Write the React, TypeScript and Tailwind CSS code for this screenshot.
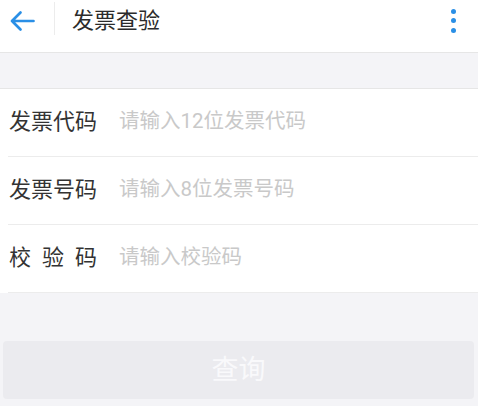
import { useState } from "react";

const FONT = { fontFamily: 'Roboto, "Noto Sans CJK SC", "Noto Sans", sans-serif' };

export default function App() {
  const [code, setCode] = useState("");
  const [number, setNumber] = useState("");
  const [check, setCheck] = useState("");
  const ready = code && number && check;

  return (
    <div className="min-h-[406px] w-[478px] bg-[#f4f4f7]" style={FONT}>
      <header className="relative flex h-[53px] items-center border-b border-[#e6e6e6] bg-white pb-[11px]">
        <button className="flex w-[44px] items-center justify-center">
          <svg width="27" height="22" viewBox="0 0 27 22" fill="none">
            <path d="M24.5 11H3M11.5 2.5 3 11l8.5 8.5" stroke="#2a8fe6" strokeWidth="2.7" strokeLinecap="round" strokeLinejoin="round" />
          </svg>
        </button>
        <div className="ml-[10px] mt-[2px] h-[33px] w-px self-start bg-[#ececec]" />
        <h1 className="ml-[17px] flex-1 text-[22px] leading-none text-[#2b2b2b]">发票查验</h1>
        <button className="flex w-[48px] flex-col items-center justify-center gap-[4.5px] pr-[2px]">
          <span className="h-[5px] w-[5px] rounded-full bg-[#2a8fe6]" />
          <span className="h-[5px] w-[5px] rounded-full bg-[#2a8fe6]" />
          <span className="h-[5px] w-[5px] rounded-full bg-[#2a8fe6]" />
        </button>
      </header>

      <div className="h-[36px] border-b border-[#e6e6e6]" />

      <div className="bg-white">
        <Field label="发票代码" placeholder="请输入12位发票代码" value={code} onChange={setCode} />
        <Field label="发票号码" placeholder="请输入8位发票号码" value={number} onChange={setNumber} />
        <Field label={["校", "验", "码"]} placeholder="请输入校验码" value={check} onChange={setCheck} />
      </div>

      <div className="px-[3px] pt-[48px]">
        <button
          className={`h-[58px] w-[471px] rounded-[4px] text-[27px] ${
            ready ? "bg-[#2a8fe6] text-white" : "bg-[#ebebef] text-[#f9f9fb]"
          }`}
        >
          查询
        </button>
      </div>
    </div>
  );
}

type FieldProps = {
  label: string | string[];
  placeholder: string;
  value: string;
  onChange: (value: string) => void;
};

function Field({ label, placeholder, value, onChange }: FieldProps) {
  return (
    <div className="ml-[8px] flex h-[68px] items-center border-b border-[#ececec] pb-[2px]">
      <span className="ml-[1px] flex w-[88px] justify-between text-[22px] leading-none text-[#333]">
        {Array.isArray(label) ? label.map((c) => <span key={c}>{c}</span>) : label}
      </span>
      <input
        value={value}
        onChange={(event) => onChange(event.target.value)}
        placeholder={placeholder}
        className="ml-[22px] min-w-0 flex-1 bg-transparent text-[20.5px] text-[#333] outline-none placeholder:text-[#c9c9c9]"
        style={FONT}
      />
    </div>
  );
}
